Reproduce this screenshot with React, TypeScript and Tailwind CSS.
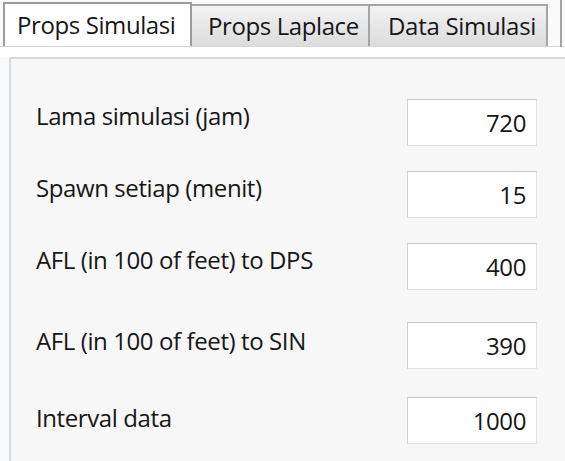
import React from "react";

const rows = [
  { label: "Lama simulasi (jam)", value: "720", mt: "mt-[40px]", pt: "pt-[5px]" },
  { label: "Spawn setiap (menit)", value: "15", mt: "mt-[25px]", pt: "pt-[5px]" },
  { label: "AFL (in 100 of feet) to DPS", value: "400", mt: "mt-[25px]", pt: "pt-[5px]" },
  { label: "AFL (in 100 of feet) to SIN", value: "390", mt: "mt-[32px]", pt: "pt-[7px]" },
  { label: "Interval data", value: "1000", mt: "mt-[28px]", pt: "pt-[9px]" },
];

export default function App() {
  return (
    <div
      className="relative w-[565px] h-[461px] overflow-hidden bg-[#fafafa] text-[#161616]"
      style={{ fontFamily: '"Open Sans", "Noto Sans", sans-serif' }}
    >
      {/* tab strip */}
      <div className="relative h-[47px] flex items-end pl-[3px] border-b border-[#d6d6d6]">
        <div className="h-[44px] w-[189px] bg-white border-2 border-b-0 border-[#9c9c9c] flex items-center pl-[12px] text-[24px] leading-[24px] tracking-[-0.4px]">
          Props Simulasi
        </div>
        <div className="h-[42px] w-[178px] bg-gradient-to-b from-[#f2f2f2] to-[#dcdcdc] border-2 border-l-0 border-b-0 border-[#a5a5a5] flex items-center pl-[16px] text-[24px] leading-[24px] tracking-[-0.4px]">
          Props Laplace
        </div>
        <div className="h-[42px] w-[178px] bg-gradient-to-b from-[#f2f2f2] to-[#dcdcdc] border-2 border-l-0 border-b-0 border-[#a5a5a5] flex items-center pl-[18px] text-[24px] leading-[24px] tracking-[-0.3px]">
          Data Simulasi
        </div>
        <div className="absolute left-[560px] top-0 h-[47px] w-[2px] bg-[#a5a5a5]" />
      </div>
      <div className="h-[10px] bg-white" />
      {/* panel */}
      <div className="ml-[9px] h-[404px] bg-[#f7f7f7] border-l-2 border-t-2 border-[#d3d9e0] flex flex-col">
        {rows.map((r) => (
          <div key={r.label} className={`${r.mt} flex items-start h-[47px]`}>
            <div className={`${r.pt} w-[396px] pl-[25px] text-[24px] leading-[24px] tracking-[-0.4px]`}>
              {r.label}
            </div>
            <div className="w-[130px] h-[47px] bg-white border border-[#e2e2e2] border-t-[#c4c4c4] border-l-[#d0d0d0] flex items-center justify-end pr-[10px] text-[24px] leading-[24px] tracking-[-0.4px]">
              {r.value}
            </div>
          </div>
        ))}
      </div>
    </div>
  );
}
